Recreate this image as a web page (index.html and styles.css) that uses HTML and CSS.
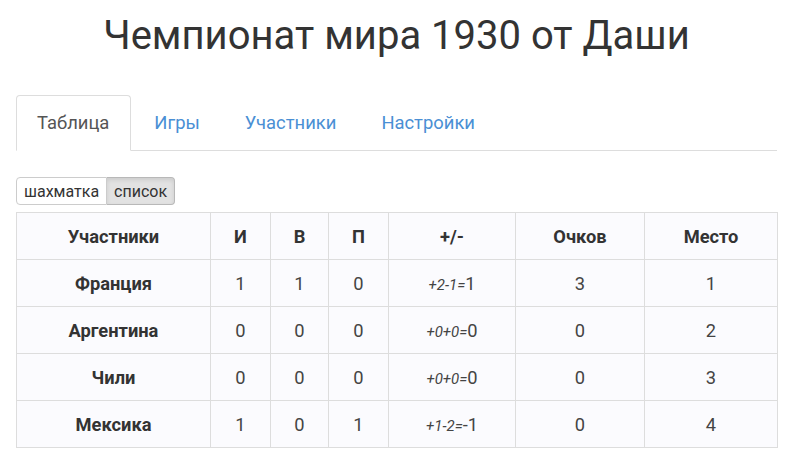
FILE: index.html
```html
<!DOCTYPE html>
<html lang="ru">
<head>
    <meta charset="UTF-8">
    <title>Чемпионат мира 1930 от Даши</title>
    <link rel="stylesheet" href="styles.css">
</head>
<body>
    <div class="container">
        <h1 class="title">Чемпионат мира 1930 от Даши</h1>
        <ul class="tabs">
            <li class="tab active"><a href="#">Таблица</a></li>
            <li class="tab"><a href="#">Игры</a></li>
            <li class="tab"><a href="#">Участники</a></li>
            <li class="tab"><a href="#">Настройки</a></li>
        </ul>
        <div class="switch">
            <button class="sw">шахматка</button><button class="sw on">список</button>
        </div>
        <table class="standings">
            <colgroup>
                <col class="c-name">
                <col class="c-i">
                <col class="c-w">
                <col class="c-l">
                <col class="c-diff">
                <col class="c-pts">
                <col class="c-place">
            </colgroup>
            <thead>
                <tr>
                    <th>Участники</th>
                    <th>И</th>
                    <th>В</th>
                    <th>П</th>
                    <th>+/-</th>
                    <th>Очков</th>
                    <th>Место</th>
                </tr>
            </thead>
            <tbody>
                <tr>
                    <th>Франция</th>
                    <td>1</td><td>1</td><td>0</td>
                    <td><i>+2-1=</i>1</td>
                    <td>3</td><td>1</td>
                </tr>
                <tr>
                    <th>Аргентина</th>
                    <td>0</td><td>0</td><td>0</td>
                    <td><i>+0+0=</i>0</td>
                    <td>0</td><td>2</td>
                </tr>
                <tr>
                    <th>Чили</th>
                    <td>0</td><td>0</td><td>0</td>
                    <td><i>+0+0=</i>0</td>
                    <td>0</td><td>3</td>
                </tr>
                <tr>
                    <th>Мексика</th>
                    <td>1</td><td>0</td><td>1</td>
                    <td><i>+1-2=</i>-1</td>
                    <td>0</td><td>4</td>
                </tr>
            </tbody>
        </table>
    </div>
</body>
</html>
```

FILE: styles.css
```css
body{
    margin: 0;
    font-family: Roboto, "Noto Sans", sans-serif;
    color: #333;
    background: #fff;
}
.container{
    padding: 0 18px 0 16px;
}
.title{
    margin: 10px 0 0;
    font-size: 40px;
    font-weight: 400;
    line-height: 52px;
    text-align: center;
}
.tabs{
    list-style: none;
    margin: 33px 0 0;
    padding: 0;
    display: flex;
    border-bottom: 1px solid #ddd;
}
.tab{
    margin-right: 2px;
    margin-bottom: -1px;
}
.tab a{
    display: block;
    padding: 16px 21px 17px 20px;
    font-size: 18.4px;
    line-height: 21px;
    color: #4a8fd4;
    text-decoration: none;
    border: 1px solid transparent;
    border-radius: 4px 4px 0 0;
}
.tab.active a{
    color: #555;
    border-color: #ddd #ddd transparent;
    background: #fff;
}
.switch{
    display: flex;
    margin-top: 26px;
}
.sw{
    font-family: inherit;
    font-size: 16px;
    line-height: 19px;
    color: #333;
    background: #fff;
    border: 1px solid #ccc;
    padding: 3px 7px 3px 7px;
    margin: 0;
    height: 28px;
    cursor: pointer;
}
.sw:first-child{
    border-radius: 4px 0 0 4px;
}
.sw:last-child{
    border-left: 0;
    border-radius: 0 4px 4px 0;
}
.sw.on{
    background: #e2e2e2;
    border-color: #b8b8b8;
    box-shadow: inset 0 2px 4px rgba(0,0,0,.1);
}
.standings{
    width: 761px;
    margin-top: 7px;
    border-collapse: collapse;
    table-layout: fixed;
    background: #fbfbfe;
}
.standings th,
.standings td{
    border: 1px solid #ddd;
    height: 46px;
    padding: 0 4px;
    text-align: center;
    font-size: 18.3px;
    color: #333;
}
.standings th{
    font-weight: 700;
}
.standings td{
    color: #444;
}
.standings i{
    font-size: 15px;
}
.c-name{ width: 194px; }
.c-i{ width: 60px; }
.c-w{ width: 58px; }
.c-l{ width: 60px; }
.c-diff{ width: 127px; }
.c-pts{ width: 129px; }
.c-place{ width: 133px; }
```
